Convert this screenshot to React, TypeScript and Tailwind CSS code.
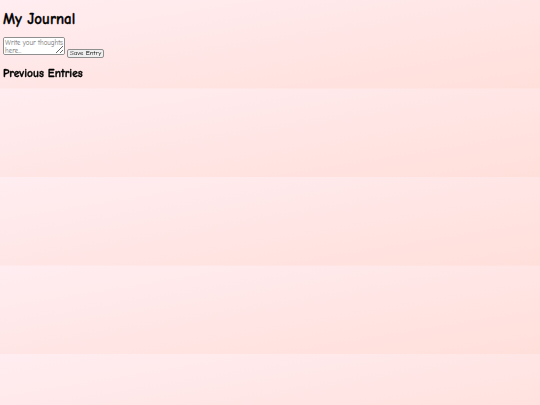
import React, { useState } from 'react';

const comic = "font-[family-name:'Comic_Neue',cursive]";

const App: React.FC = () => {
  const [text, setText] = useState('');

  return (
    <div
      className={`min-h-screen w-full px-[3px] text-black ${comic} bg-linear-to-br from-[#ffedf1] to-[#ffdfda] [background-size:100%_88.5px] bg-repeat`}
    >
      <h1 className={`pt-[10px] text-[15px] leading-[19px] font-bold [-webkit-text-stroke:0.3px_black] ${comic}`}>
        My Journal
      </h1>

      <div className="mt-[8px] flex items-end gap-[2px]">
        <textarea
          value={text}
          onChange={e => setText(e.target.value)}
          placeholder="Write your thoughts here..."
          className={`w-[62px] h-[18px] resize-y rounded-[2px] border border-[#8f8f8f] bg-white px-[1px] py-[1px] text-[6.9px] leading-[8px] placeholder-[#6f6f6f] ${comic}`}
        />
        <button
          type="button"
          className={`mb-[-3px] h-[9px] rounded-[2px] border border-[#8f8f8f] bg-[#efefef] px-[2px] text-[6.8px] leading-[7px] ${comic}`}
        >
          Save Entry
        </button>
      </div>

      <h2 className={`mt-[11px] text-[11.5px] leading-[16px] font-bold [-webkit-text-stroke:0.35px_black] ${comic}`}>
        Previous Entries
      </h2>
    </div>
  );
};

export default App;
